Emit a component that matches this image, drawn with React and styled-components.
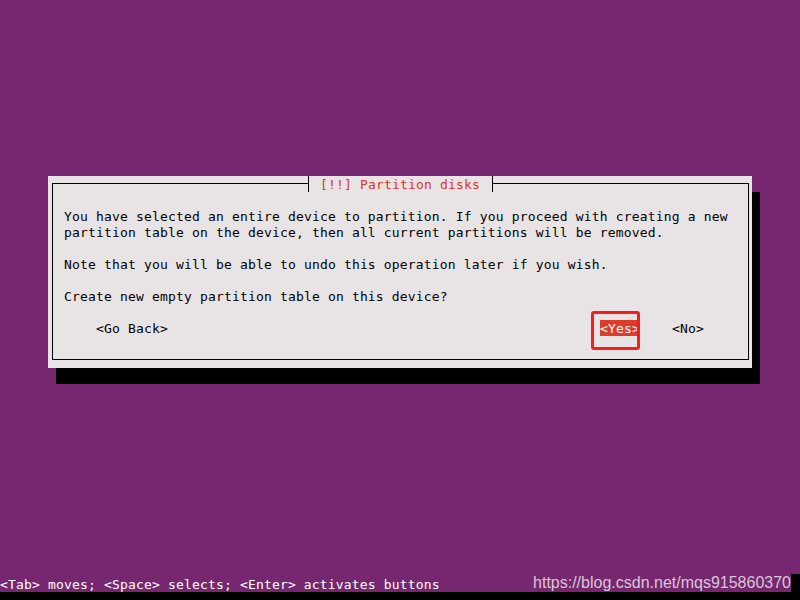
import React from 'react'
import styled, { createGlobalStyle } from 'styled-components'

const Global = createGlobalStyle`
  html, body {
    margin: 0;
    padding: 0;
    background: #000;
  }
  #root {
    width: 800px;
    height: 600px;
  }
`

const Screen = styled.div`
  position: relative;
  width: 800px;
  height: 600px;
  display: flex;
  flex-direction: column;
  background: #000;
  font-family: 'DejaVu Sans Mono', 'Liberation Mono', monospace;
  font-size: 13px;
  letter-spacing: 0.17px;
  line-height: 18px;
  overflow: hidden;
`

const Console = styled.div`
  height: 592px;
  background: #76276f;
  display: flex;
  flex-direction: column;
`

const Dialog = styled.div`
  margin: 176px 0 0 48px;
  width: 704px;
  height: 192px;
  box-sizing: border-box;
  padding: 7px 3px 8px 4px;
  background: #e8e4e6;
  box-shadow: 8px 16px 0 #000;
  color: #000;
`

const Frame = styled.div`
  position: relative;
  height: 100%;
  box-sizing: border-box;
  border: 1px solid #000;
  padding: 24px 0 0 11px;
`

const Title = styled.div`
  position: absolute;
  left: 255px;
  top: -8px;
  height: 16px;
  box-sizing: border-box;
  padding: 0 12px 0 11px;
  border-left: 1px solid #000;
  border-right: 1px solid #000;
  background: #e8e4e6;
  color: #e0342a;
  white-space: pre;
`

const Line = styled.div`
  height: 16px;
  white-space: pre;
  margin-bottom: ${(p) => (p.$gap ? '16px' : '0')};
`

const ButtonRow = styled.div`
  display: flex;
  height: 16px;
  margin-top: 16px;
  padding-left: 32px;
`

const Button = styled.span`
  position: relative;
  display: inline-block;
  height: 16px;
  white-space: pre;
  margin-left: ${(p) => p.$offset || 0}px;
  color: ${(p) => (p.$active ? '#fff' : '#000')};
  background: ${(p) => (p.$active ? '#dc3d2b' : 'transparent')};
`

const Marker = styled.span`
  position: absolute;
  left: -9px;
  top: -9px;
  width: 49px;
  height: 39px;
  box-sizing: border-box;
  border: 3px solid #f41f1a;
  border-radius: 3px;
`

const Spacer = styled.div`
  flex: 1;
`

const StatusLine = styled.div`
  height: 16px;
  color: #fff;
  white-space: pre;
`

const Watermark = styled.div`
  position: absolute;
  right: 0;
  bottom: 8px;
  height: 18px;
  padding-left: 4px;
  border-right: 9px solid #000;
  background: #76276f;
  color: #d9c6d8;
  font-family: 'Liberation Sans', Arial, sans-serif;
  font-size: 16px;
  letter-spacing: 0;
  line-height: 18px;
`

export default function App() {
  return (
    <>
      <Global />
      <Screen>
        <Console>
          <Dialog>
            <Frame>
              <Title>[!!] Partition disks</Title>
              <Line>You have selected an entire device to partition. If you proceed with creating a new</Line>
              <Line $gap>partition table on the device, then all current partitions will be removed.</Line>
              <Line $gap>Note that you will be able to undo this operation later if you wish.</Line>
              <Line>Create new empty partition table on this device?</Line>
              <ButtonRow>
                <Button>{'<Go Back>'}</Button>
                <Button $active $offset={432}>
                  {'<Yes>'}
                  <Marker />
                </Button>
                <Button $offset={32}>{'<No>'}</Button>
              </ButtonRow>
            </Frame>
          </Dialog>
          <Spacer />
          <StatusLine>{'<Tab> moves; <Space> selects; <Enter> activates buttons'}</StatusLine>
        </Console>
        <Watermark>https://blog.csdn.net/mqs915860370</Watermark>
      </Screen>
    </>
  )
}
